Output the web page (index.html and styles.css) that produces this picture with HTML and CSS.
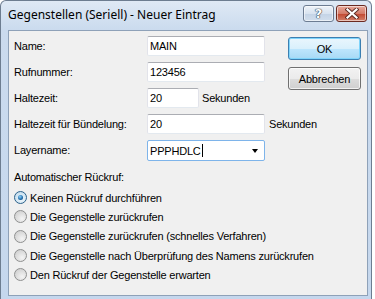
FILE: index.html
```html
<!DOCTYPE html>
<html lang="de">
<head>
<meta charset="utf-8">
<title>Gegenstellen (Seriell) - Neuer Eintrag</title>
<link rel="stylesheet" href="styles.css">
</head>
<body>
<div class="window">
  <div class="titlebar">
    <span class="title">Gegenstellen (Seriell) - Neuer Eintrag</span>
    <div class="caption-buttons">
      <div class="cap-btn help"><span>?</span></div>
      <div class="cap-btn close">
        <svg width="14" height="11" viewBox="0 0 14 11">
          <path d="M2.5 1.5 L11.5 9.5 M11.5 1.5 L2.5 9.5" stroke="#5a2a22" stroke-width="4" stroke-linecap="square" fill="none"/>
          <path d="M2.5 1.5 L11.5 9.5 M11.5 1.5 L2.5 9.5" stroke="#ffffff" stroke-width="2.2" stroke-linecap="square" fill="none"/>
        </svg>
      </div>
    </div>
  </div>
  <div class="client">
    <div class="form">
      <label class="lbl r1">Name:</label>
      <div class="field wide r1">MAIN</div>
      <div class="buttons">
        <div class="btn default">OK</div>
        <div class="btn">Abbrechen</div>
      </div>

      <label class="lbl r2">Rufnummer:</label>
      <div class="field wide r2">123456</div>

      <label class="lbl r3">Haltezeit:</label>
      <div class="inline r3">
        <div class="field short">20</div>
        <span class="unit">Sekunden</span>
      </div>

      <label class="lbl r4">Haltezeit für Bündelung:</label>
      <div class="field wide r4">20</div>
      <span class="unit unit-far r4">Sekunden</span>

      <label class="lbl r5">Layername:</label>
      <div class="combo r5">
        <span class="combo-text">PPPHDLC<span class="caret"></span></span>
        <span class="arrow"></span>
      </div>
    </div>

    <div class="group">
      <div class="group-title">Automatischer Rückruf:</div>
      <div class="radio"><span class="dot checked"></span>Keinen Rückruf durchführen</div>
      <div class="radio"><span class="dot"></span>Die Gegenstelle zurückrufen</div>
      <div class="radio"><span class="dot"></span>Die Gegenstelle zurückrufen (schnelles Verfahren)</div>
      <div class="radio"><span class="dot"></span>Die Gegenstelle nach Überprüfung des Namens zurückrufen</div>
      <div class="radio"><span class="dot"></span>Den Rückruf der Gegenstelle erwarten</div>
    </div>
  </div>
</div>
</body>
</html>
```

FILE: styles.css
```css
html, body {
  margin: 0;
  padding: 0;
  background: #ffffff;
}

body {
  font-family: "Liberation Sans", Arial, sans-serif;
  font-size: 11px;
  letter-spacing: -0.2px;
  color: #000;
}

.window {
  width: 372px;
  height: 299px;
  box-sizing: border-box;
  border: 1px solid #6d7d90;
  border-bottom: none;
  border-radius: 6px 6px 0 0;
  background: linear-gradient(#dfe9f5, #cbdbee 28px, #c5d7ed);
  padding: 0 3px 3px 7px;
  display: flex;
  flex-direction: column;
}

.titlebar {
  height: 29px;
  display: flex;
  align-items: flex-start;
  justify-content: space-between;
  flex: none;
}

.title {
  font-family: "Noto Sans", "Open Sans", sans-serif;
  font-size: 12px;
  letter-spacing: 0;
  line-height: 16px;
  padding-top: 6px;
  color: #000;
}

.caption-buttons {
  display: flex;
  gap: 2px;
  margin-top: 4px;
  margin-right: 1px;
}

.cap-btn {
  height: 15px;
  width: 29px;
  border: 1px solid #6c7c92;
  border-radius: 3px;
  display: flex;
  align-items: center;
  justify-content: center;
  box-shadow: inset 0 0 0 1px rgba(255,255,255,0.55);
}

.help {
  background: linear-gradient(#eef3f9, #d8e3f0 50%, #c4d3e6 51%, #d1deed);
}

.help span {
  font-family: "DejaVu Sans", sans-serif;
  font-weight: bold;
  font-size: 13px;
  line-height: 13px;
  color: #ffffff;
  text-shadow: 0 0 1px #2f3c4c, 0 0 1px #2f3c4c, 0 0 1px #2f3c4c;
}

.close {
  border-color: #6b2b22;
  background: linear-gradient(#e8aa9c, #d47b69 50%, #c2462f 51%, #d2806a);
}

.close svg {
  display: block;
}

.client {
  flex: 1;
  background: #f0f0f0;
  border: 1px solid #8ea1b8;
  padding: 5px 6px 0 5px;
}

.form {
  display: grid;
  grid-template-columns: 133px 118px 23px 73px;
  grid-template-rows: repeat(4, 20px) 21px;
  row-gap: 6px;
  align-items: center;
}

.r1 { grid-row: 1; }
.r2 { grid-row: 2; }
.r3 { grid-row: 3; }
.r4 { grid-row: 4; }
.r5 { grid-row: 5; }

.lbl {
  grid-column: 1;
  line-height: 13px;
}

.field {
  box-sizing: border-box;
  height: 20px;
  background: #fff;
  border: 1px solid #e2e3ea;
  border-top-color: #abadb3;
  border-bottom-color: #e3e9ef;
  border-radius: 2px;
  padding: 0 2px;
  line-height: 18px;
}

.wide {
  grid-column: 2;
}

.short {
  width: 52px;
}

.inline {
  grid-column: 2 / span 2;
  display: flex;
  align-items: center;
  gap: 3px;
}

.unit-far {
  grid-column: 3 / span 2;
  padding-left: 4px;
}

.buttons {
  grid-column: 4;
  grid-row: 1 / span 3;
  align-self: start;
  display: flex;
  flex-direction: column;
  gap: 7px;
  margin-top: 1px;
}

.btn {
  box-sizing: border-box;
  height: 23px;
  border: 1px solid #707070;
  border-radius: 3px;
  background: linear-gradient(#f2f2f2, #ebebeb 50%, #dddddd 51%, #cfcfcf);
  box-shadow: inset 0 0 0 1px rgba(255,255,255,0.7);
  display: flex;
  align-items: center;
  justify-content: center;
}

.btn.default {
  border-color: #3c7fb1;
  background: linear-gradient(#eaf6fd, #d9f0fc 50%, #bee6fd 51%, #a7d9f5);
  box-shadow: inset 0 0 0 1px #7fd4fb;
}

.combo {
  grid-column: 2;
  box-sizing: border-box;
  height: 21px;
  background: #fff;
  border: 1px solid #7eb4ea;
  border-radius: 2px;
  display: flex;
  align-items: center;
  justify-content: space-between;
  padding: 0 5px 0 2px;
}

.combo-text {
  display: flex;
  align-items: center;
}

.caret {
  display: inline-block;
  width: 1px;
  height: 13px;
  background: #000;
  margin-left: 1px;
}

.arrow {
  width: 0;
  height: 0;
  border-left: 3.5px solid transparent;
  border-right: 3.5px solid transparent;
  border-top: 4px solid #000;
  margin-right: 1px;
}

.group {
  margin-top: 10px;
  display: flex;
  flex-direction: column;
}

.group-title {
  line-height: 13px;
  margin-bottom: 4px;
}

.radio {
  height: 19.3px;
  display: flex;
  align-items: center;
  gap: 3px;
}

.dot {
  box-sizing: border-box;
  width: 13px;
  height: 13px;
  border-radius: 50%;
  border: 1px solid #8f9090;
  background: radial-gradient(circle at 65% 70%, #f4f4f4, #dcdcdc 55%, #c8c8c8);
  display: flex;
  align-items: center;
  justify-content: center;
}

.dot.checked {
  border-color: #2c628b;
  background: radial-gradient(circle at 60% 65%, #eef6fb, #cfe4f2 60%, #b9d3e6);
}

.dot.checked::after {
  content: "";
  width: 5px;
  height: 5px;
  border-radius: 50%;
  background: radial-gradient(circle at 40% 35%, #8ed2f8, #1b68a8 60%, #0e3f6a);
}
```
